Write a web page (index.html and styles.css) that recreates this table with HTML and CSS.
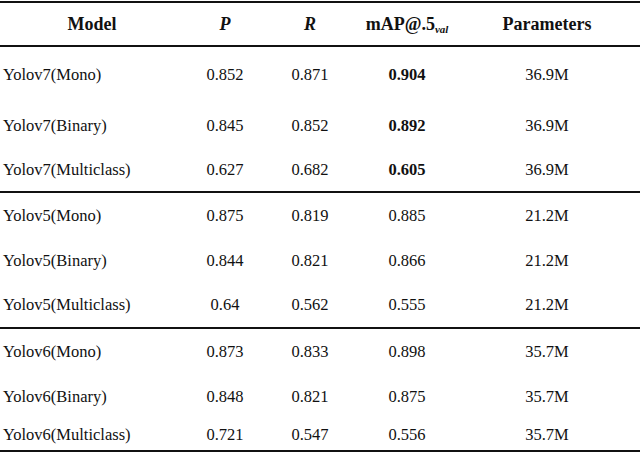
FILE: index.html
```html
<!DOCTYPE html>
<html>
<head>
<meta charset="utf-8">
<link rel="stylesheet" href="styles.css">
</head>
<body>
<div class="table">
  <div class="row head">
    <div class="c model">Model</div>
    <div class="c"><i>P</i></div>
    <div class="c"><i>R</i></div>
    <div class="c">mAP@.5<sub>val</sub></div>
    <div class="c">Parameters</div>
  </div>
  <div class="group">
    <div class="row r56"><div class="c name">Yolov7(Mono)</div><div class="c">0.852</div><div class="c">0.871</div><div class="c"><b>0.904</b></div><div class="c">36.9M</div></div>
    <div class="row r46"><div class="c name">Yolov7(Binary)</div><div class="c">0.845</div><div class="c">0.852</div><div class="c"><b>0.892</b></div><div class="c">36.9M</div></div>
    <div class="row r42"><div class="c name">Yolov7(Multiclass)</div><div class="c">0.627</div><div class="c">0.682</div><div class="c"><b>0.605</b></div><div class="c">36.9M</div></div>
  </div>
  <div class="group">
    <div class="row r46"><div class="c name">Yolov5(Mono)</div><div class="c">0.875</div><div class="c">0.819</div><div class="c">0.885</div><div class="c">21.2M</div></div>
    <div class="row r44"><div class="c name">Yolov5(Binary)</div><div class="c">0.844</div><div class="c">0.821</div><div class="c">0.866</div><div class="c">21.2M</div></div>
    <div class="row r44"><div class="c name">Yolov5(Multiclass)</div><div class="c">0.64</div><div class="c">0.562</div><div class="c">0.555</div><div class="c">21.2M</div></div>
  </div>
  <div class="group">
    <div class="row r46"><div class="c name">Yolov6(Mono)</div><div class="c">0.873</div><div class="c">0.833</div><div class="c">0.898</div><div class="c">35.7M</div></div>
    <div class="row r44"><div class="c name">Yolov6(Binary)</div><div class="c">0.848</div><div class="c">0.821</div><div class="c">0.875</div><div class="c">35.7M</div></div>
    <div class="row r31"><div class="c name">Yolov6(Multiclass)</div><div class="c">0.721</div><div class="c">0.547</div><div class="c">0.556</div><div class="c">35.7M</div></div>
  </div>
</div>
</body>
</html>
```
FILE: styles.css
```css
html, body {
  margin: 0;
  padding: 0;
  background: #fff;
}
body {
  width: 640px;
  height: 452px;
  overflow: hidden;
  font-family: "Liberation Serif", "Times New Roman", serif;
  font-size: 16.5px;
  color: #111;
}
.table {
  margin-top: 1px;
  border-top: 2px solid #111;
  border-bottom: 2px solid #111;
}
.row {
  display: grid;
  grid-template-columns: 184px 82px 88px 106px 180px;
  align-items: center;
}
.c {
  text-align: center;
  white-space: nowrap;
}
.row .c:last-child {
  padding-right: 6px;
}
.c.name {
  text-align: left;
  padding-left: 3px;
}
.head {
  height: 42px;
  font-weight: bold;
  font-size: 18px;
  border-bottom: 2px solid #111;
}
.head sub {
  font-size: 11px;
  font-style: italic;
  vertical-align: -3px;
  line-height: 0;
}
.group + .group {
  border-top: 2px solid #111;
}
.r56 { height: 56px; }
.r46 { height: 46px; }
.r44 { height: 44px; }
.r42 { height: 42px; }
.r31 { height: 31px; }
```
